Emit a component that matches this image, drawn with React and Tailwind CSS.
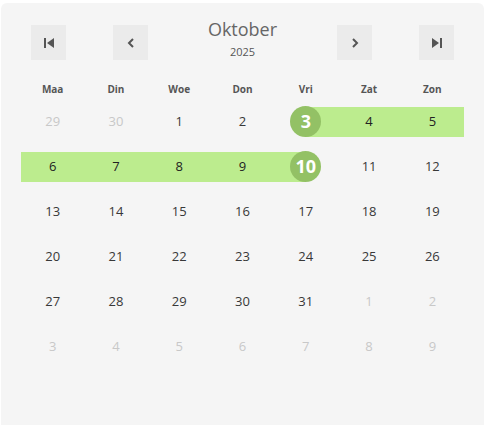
import React from 'react';

const dayNames = ['Maa', 'Din', 'Woe', 'Don', 'Vri', 'Zat', 'Zon'];

// October 2025, Monday-first, with spill-over days from Sep / Nov
const weeks = [
  [[29, 'o'], [30, 'o'], [1], [2], [3, 'start'], [4, 'in'], [5, 'in']],
  [[6, 'in'], [7, 'in'], [8, 'in'], [9, 'in'], [10, 'end'], [11], [12]],
  [[13], [14], [15], [16], [17], [18], [19]],
  [[20], [21], [22], [23], [24], [25], [26]],
  [[27], [28], [29], [30], [31], [1, 'o'], [2, 'o']],
  [[3, 'o'], [4, 'o'], [5, 'o'], [6, 'o'], [7, 'o'], [8, 'o'], [9, 'o']],
];

function NavButton({ children }) {
  return (
    <button className="w-[35px] h-[35px] bg-[#ebebeb] flex items-center justify-center text-[#555]">
      {children}
    </button>
  );
}

function DayCell({ day, kind }) {
  const edge = kind === 'start' || kind === 'end';
  return (
    <div className="relative h-[45px] flex items-center justify-center">
      {kind === 'in' && <div className="absolute inset-x-0 top-[8px] h-[30px] bg-[#bcec8e]" />}
      {kind === 'start' && <div className="absolute right-0 left-1/2 top-[8px] h-[30px] bg-[#bcec8e]" />}
      {kind === 'end' && <div className="absolute left-0 right-1/2 top-[8px] h-[30px] bg-[#bcec8e]" />}
      {edge ? (
        <span className="relative w-[31px] h-[31px] rounded-full bg-[#93c165] text-white font-bold text-[18px] flex items-center justify-center">
          {day}
        </span>
      ) : (
        <span className={`relative text-[13px] ${kind === 'o' ? 'text-[#c8c8c8]' : kind === 'in' ? 'text-[#222]' : 'text-[#383838]'}`}>
          {day}
        </span>
      )}
    </div>
  );
}

export default function App() {
  return (
    <div className="w-[484px] h-[425px] bg-white pt-[3px] pl-[1px] overflow-hidden" style={{ fontFamily: '"Open Sans", sans-serif' }}>
      <div className="w-[483px] h-[430px] rounded-md bg-[#f5f5f5] px-5 pt-[14px]">
        <div className="flex items-start justify-between px-[10px]">
          <div className="flex gap-[47px] mt-2">
            <NavButton>
              <svg width="12" height="12" viewBox="0 0 12 12" fill="currentColor">
                <rect x="1" y="1" width="2" height="10" />
                <path d="M11 1 L11 11 L4 6 Z" />
              </svg>
            </NavButton>
            <NavButton>
              <svg width="8" height="12" viewBox="0 0 8 12" fill="none" stroke="currentColor" strokeWidth="2">
                <path d="M6 2 L2 6 L6 10" />
              </svg>
            </NavButton>
          </div>
          <div className="flex flex-col items-center">
            <div className="text-[18px] leading-6 text-[#666]">Oktober</div>
            <div className="text-[11px] leading-[15px] mt-[3px] text-[#555]">2025</div>
          </div>
          <div className="flex gap-[47px] mt-2">
            <NavButton>
              <svg width="8" height="12" viewBox="0 0 8 12" fill="none" stroke="currentColor" strokeWidth="2">
                <path d="M2 2 L6 6 L2 10" />
              </svg>
            </NavButton>
            <NavButton>
              <svg width="12" height="12" viewBox="0 0 12 12" fill="currentColor">
                <path d="M1 1 L1 11 L8 6 Z" />
                <rect x="9" y="1" width="2" height="10" />
              </svg>
            </NavButton>
          </div>
        </div>
        <div className="grid grid-cols-7 mt-[19px]">
          {dayNames.map((d) => (
            <div key={d} className="h-5 flex items-center justify-center text-[10px] font-bold text-[#555]">
              {d}
            </div>
          ))}
        </div>
        <div className="grid grid-cols-7">
          {weeks.flat().map(([day, kind], i) => (
            <DayCell key={i} day={day} kind={kind} />
          ))}
        </div>
      </div>
    </div>
  );
}
